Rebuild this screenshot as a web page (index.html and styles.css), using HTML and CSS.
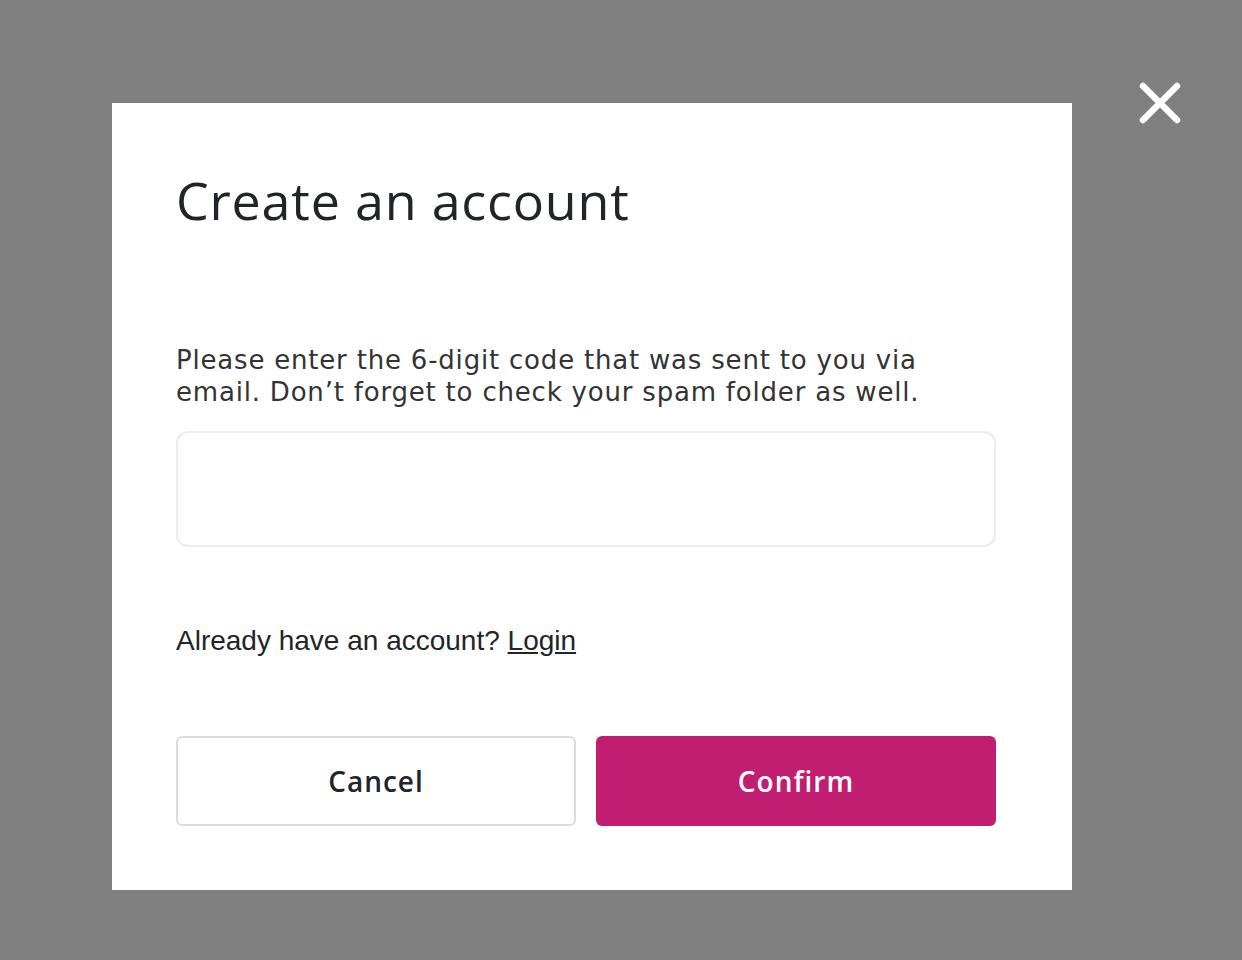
FILE: index.html
```html
<!DOCTYPE html>
<html lang="en">
<head>
<meta charset="utf-8">
<title>Create an account</title>
<link rel="stylesheet" href="styles.css">
</head>
<body>
<div class="overlay">
  <div class="modal">
    <h1 class="title">Create an account</h1>
    <p class="lead">Please enter the 6-digit code that was sent to you via<br>email. Don’t forget to check your spam folder as well.</p>
    <input class="code-input" type="text" aria-label="6-digit code">
    <p class="login-line">Already have an account? <a class="login-link" href="#">Login</a></p>
    <div class="actions">
      <button class="btn btn-cancel" type="button">Cancel</button>
      <button class="btn btn-confirm" type="button">Confirm</button>
    </div>
  </div>
  <button class="close" type="button" aria-label="Close">
    <svg width="44" height="44" viewBox="0 0 44 44"><path d="M5 5 L39 39 M39 5 L5 39" stroke="#fff" stroke-width="6.5" stroke-linecap="round" fill="none"/></svg>
  </button>
</div>
</body>
</html>
```
FILE: styles.css
```css
html, body {
  margin: 0;
  padding: 0;
  background: #808080;
}
.overlay {
  position: relative;
  width: 1242px;
  height: 960px;
  box-sizing: border-box;
  padding: 103px 0 0 112px;
  font-family: "Open Sans", "Noto Sans", sans-serif;
}
.modal {
  width: 960px;
  height: 787px;
  box-sizing: border-box;
  background: #fff;
  padding: 67px 76px 64px 64px;
  display: flex;
  flex-direction: column;
}
.title {
  margin: 0;
  font-size: 52px;
  line-height: 60px;
  font-weight: 400;
  letter-spacing: 0.8px;
  color: #212529;
}
.lead {
  margin: 114px 0 0;
  font-family: "DejaVu Sans", "Open Sans", sans-serif;
  font-size: 26px;
  line-height: 32px;
  letter-spacing: 0.8px;
  white-space: nowrap;
  color: #333;
}
.code-input {
  margin-top: 23px;
  height: 116px;
  box-sizing: border-box;
  border: 2px solid #ececec;
  border-radius: 12px;
  background: #fff;
  outline: none;
  width: 100%;
}
.login-line {
  margin: 78px 0 0;
  font-family: "Liberation Sans", Arial, sans-serif;
  font-size: 28px;
  line-height: 32px;
  color: #212529;
}
.login-link {
  color: #212529;
  text-decoration: underline;
}
.actions {
  margin-top: 79px;
  display: grid;
  grid-template-columns: 1fr 1fr;
  gap: 20px;
}
.btn {
  height: 90px;
  box-sizing: border-box;
  border-radius: 6px;
  font-family: "Open Sans", "Noto Sans", sans-serif;
  font-size: 28px;
  font-weight: 600;
  letter-spacing: 1px;
  cursor: pointer;
}
.btn-cancel {
  background: #fff;
  border: 2px solid #dcdcdc;
  color: #212529;
}
.btn-confirm {
  background: #c11e72;
  border: none;
  color: #fff;
}
.close {
  position: absolute;
  left: 1138px;
  top: 81px;
  width: 44px;
  height: 44px;
  padding: 0;
  border: none;
  background: transparent;
  cursor: pointer;
}
.close svg {
  display: block;
}
```
